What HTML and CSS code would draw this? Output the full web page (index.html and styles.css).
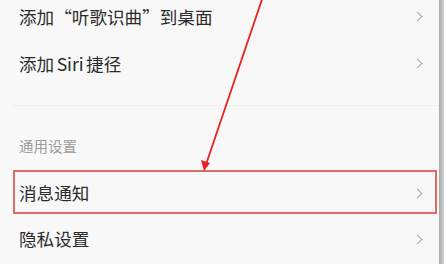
FILE: index.html
```html
<!DOCTYPE html>
<html lang="zh-CN">
<head>
    <meta charset="UTF-8">
    <meta name="viewport" content="width=device-width, initial-scale=1.0">
    <title>设置</title>
    <link rel="stylesheet" href="styles.css">
</head>
<body>
    <div class="page">
        <div class="content">
            <!-- 快捷方式 -->
            <div class="group">
                <div class="row">
                    <span class="label">添加“听歌识曲”到桌面</span>
                    <span class="chevron"></span>
                </div>
                <div class="row">
                    <span class="label">添加 Siri 捷径</span>
                    <span class="chevron"></span>
                </div>
            </div>

            <div class="section-title">通用设置</div>

            <div class="group">
                <div class="row marked">
                    <span class="label">消息通知</span>
                    <span class="chevron"></span>
                </div>
                <div class="row">
                    <span class="label">隐私设置</span>
                    <span class="chevron"></span>
                </div>
            </div>
        </div>
        <div class="scrollbar"></div>

        <!-- 标注箭头 -->
        <svg class="pointer" width="444" height="264" viewBox="0 0 444 264">
            <line x1="262.5" y1="-2" x2="206.5" y2="163" stroke="#e8231f" stroke-width="1.8"/>
            <polygon points="204,171 201,160 210,163" fill="#e8231f"/>
        </svg>
    </div>
</body>
</html>
```

FILE: styles.css
```css
body {
    margin: 0;
    padding: 0;
    background-color: #f8f8f8;
    font-family: "Noto Sans CJK SC", "Noto Sans", sans-serif;
    color: #2b2b2b;
    overflow: hidden;
}

.page {
    position: relative;
    width: 444px;
    height: 264px;
    display: flex;
    overflow: hidden;
}

.content {
    flex: 1;
    margin-top: -7px;
}

.group:first-child {
    padding-bottom: 18px;
    border-bottom: 1px solid #efefef;
    margin-left: 13px;
}

.group:first-child .row {
    padding-left: 6px;
}

.row {
    position: relative;
    height: 47px;
    display: flex;
    align-items: center;
    justify-content: space-between;
    padding: 0 16px 0 19px;
}

.group:last-child .row {
    height: 46px;
}

.label {
    font-size: 17.6px;
    line-height: 24px;
    word-spacing: -1.5px;
}

.chevron {
    width: 6px;
    height: 6px;
    border-top: 1.5px solid #a5a5a5;
    border-right: 1.5px solid #a5a5a5;
    transform: rotate(45deg);
    margin-right: 2px;
}

.section-title {
    font-size: 14.5px;
    color: #9c9c9c;
    line-height: 20px;
    padding: 30px 19px 14px;
}

.marked::after {
    content: "";
    position: absolute;
    left: 13px;
    right: 2px;
    top: 0;
    bottom: 2px;
    border: 2px solid #e06a66;
}

.scrollbar {
    width: 5px;
    background: linear-gradient(to right, #a9a9a9, #d4d4d4);
}

.pointer {
    position: absolute;
    left: 0;
    top: 0;
}
```
